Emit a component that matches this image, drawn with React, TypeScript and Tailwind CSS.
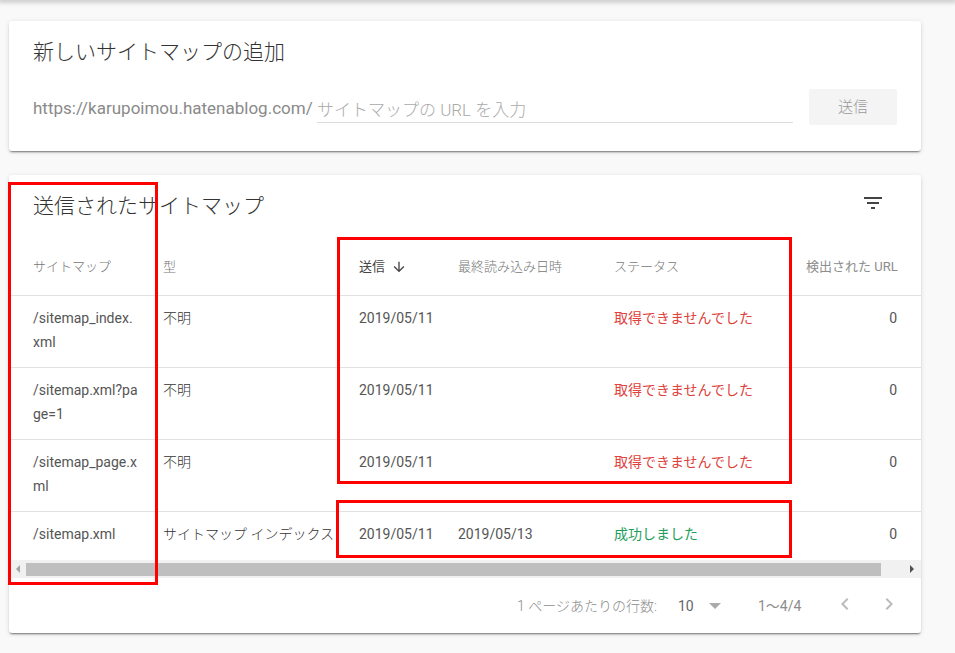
const font = { fontFamily: '"Roboto", "Noto Sans CJK JP", sans-serif' }

const rowGrid = 'grid grid-cols-[154px_196px_99px_156px_1fr_115px]'
const cardShadow = 'shadow-[0_2px_2px_-1px_rgba(0,0,0,0.5),0_1px_5px_rgba(0,0,0,0.12)]'

const rows = [
  { path: ['/sitemap_index.', 'xml'], type: '不明', sent: '2019/05/11', read: '', status: '取得できませんでした', ok: false },
  { path: ['/sitemap.xml?pa', 'ge=1'], type: '不明', sent: '2019/05/11', read: '', status: '取得できませんでした', ok: false },
  { path: ['/sitemap_page.x', 'ml'], type: '不明', sent: '2019/05/11', read: '', status: '取得できませんでした', ok: false },
  { path: ['/sitemap.xml'], type: 'サイトマップ インデックス', sent: '2019/05/11', read: '2019/05/13', status: '成功しました', ok: true },
]

function Icon({ d, className }: { d: string; className: string }) {
  return (
    <svg viewBox="0 0 24 24" className={className} fill="currentColor">
      <path d={d} />
    </svg>
  )
}

export default function App() {
  return (
    <div style={font} className="relative h-[653px] w-[955px] overflow-hidden bg-[#f9f9f9] text-[#555]">
      <div className="h-0 w-full shadow-[0_0_5px_2px_rgba(0,0,0,0.25)]" />

      <div className="px-[9px] pt-[21px]">
        {/* add sitemap */}
        <section className={`h-[130px] w-[912px] rounded-[3px] bg-white px-6 ${cardShadow}`}>
          <h2 className="pt-[15px] text-[21px] leading-8 font-light text-[#333]">新しいサイトマップの追加</h2>
          <div className="mt-[21px] flex items-start">
            <span className="mt-[7px] w-[284px] text-[17px] leading-6 whitespace-nowrap text-[#8a8a8a]">
              https://karupoimou.hatenablog.com/
            </span>
            <div className="mt-[9px] h-[25px] w-[476px] border-b border-[#ddd] text-[17px] leading-6 font-light text-[#aaa]">
              サイトマップの URL を入力
            </div>
            <button className="ml-4 h-9 w-[88px] rounded-[2px] bg-[#f4f4f4] text-[15px] font-light text-[#999]">送信</button>
          </div>
        </section>

        {/* submitted sitemaps */}
        <section className={`mt-6 h-[458px] w-[912px] rounded-[3px] bg-white ${cardShadow}`}>
          <div className="flex h-[60px] items-start justify-between pr-9 pl-6">
            <h2 className="pt-[15px] text-[21px] leading-8 font-light text-[#333]">送信されたサイトマップ</h2>
            <Icon
              className="mt-4 h-6 w-6 text-[#444]"
              d="M10 18h4v-2h-4v2zM3 6v2h18V6H3zm3 7h12v-2H6v2z"
            />
          </div>

          <div className={`${rowGrid} h-[61px] items-center border-b border-[#e2e2e2] pt-[3px] text-[13px] text-[#777]`}>
            <div className="pl-6 font-light">サイトマップ</div>
            <div className="font-light">型</div>
            <div className="flex items-center text-[#444]">
              送信
              <Icon
                className="ml-[6px] h-4 w-4 text-[#444]"
                d="M20 12l-1.41-1.41L13 16.17V4h-2v12.17l-5.58-5.59L4 12l8 8 8-8z"
              />
            </div>
            <div className="font-light">最終読み込み日時</div>
            <div className="font-light">ステータス</div>
            <div className="pr-6 text-right whitespace-nowrap text-[#8c8c8c]">検出された URL</div>
          </div>

          {rows.map((row, i) => (
            <div
              key={i}
              className={`${rowGrid} text-[14px] leading-6 ${
                i < 3 ? 'h-[72px] border-b border-[#e2e2e2]' : 'h-[48px]'
              } pt-[10px]`}
            >
              <div className="pl-6">
                {row.path.map((line) => (
                  <div key={line}>{line}</div>
                ))}
              </div>
              <div className="font-light whitespace-nowrap text-[#333]">{row.type}</div>
              <div>{row.sent}</div>
              <div>{row.read}</div>
              <div className={row.ok ? 'text-[#1e9e5a]' : 'text-[#e0413a]'}>{row.status}</div>
              <div className="pr-6 text-right">0</div>
            </div>
          ))}

          {/* horizontal scrollbar */}
          <div className="flex h-[18px] w-full items-center bg-[#f1f1f1]">
            <div className="flex w-[17px] justify-center">
              <div className="h-0 w-0 border-y-4 border-r-4 border-y-transparent border-r-[#a3a3a3]" />
            </div>
            <div className="h-[13px] w-[855px] bg-[#bfbfbf]" />
            <div className="flex flex-1 justify-end pr-[7px]">
              <div className="h-0 w-0 border-y-4 border-l-4 border-y-transparent border-l-[#505050]" />
            </div>
          </div>

          {/* pagination */}
          <div className="flex h-[56px] items-center text-[14px] text-[#8c8c8c]">
            <span className="ml-[508px] w-[161px] font-light whitespace-nowrap">1 ページあたりの行数:</span>
            <span className="w-[31px] text-[#666]">10</span>
            <div className="h-0 w-0 border-x-[6px] border-t-[6px] border-x-transparent border-t-[#aaa]" />
            <span className="ml-[37px] w-[43px] whitespace-nowrap">1〜4/4</span>
            <Icon
              className="mb-1 ml-[32px] h-6 w-6 text-[#bbb]"
              d="M15.41 7.41L14 6l-6 6 6 6 1.41-1.41L10.83 12z"
            />
            <Icon
              className="mb-1 ml-5 h-6 w-6 text-[#bbb]"
              d="M10 6L8.59 7.41 13.17 12l-4.58 4.59L10 18l6-6z"
            />
          </div>
        </section>
      </div>

      {/* red annotation boxes drawn over the screenshot */}
      <div className="absolute top-[182px] left-[8px] h-[403px] w-[150px] border-[3px] border-[#ff0000]" />
      <div className="absolute top-[237px] left-[337px] h-[247px] w-[455px] border-[3px] border-[#ff0000]" />
      <div className="absolute top-[500px] left-[336px] h-[58px] w-[456px] border-[3px] border-[#ff0000]" />
    </div>
  )
}
